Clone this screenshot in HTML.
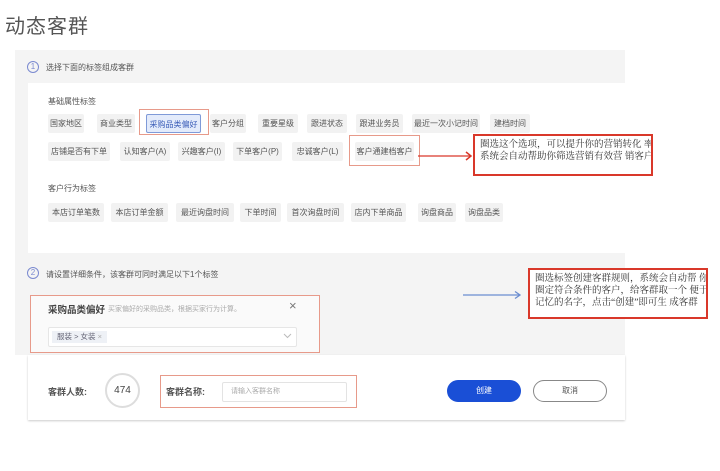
<!DOCTYPE html>
<html><head><meta charset="utf-8"><style>
*{margin:0;padding:0;box-sizing:border-box}
body{width:720px;height:471px;background:#fff;position:relative;overflow:hidden;font-family:"Liberation Sans","Noto Sans CJK SC",sans-serif;color:#555}
.a{position:absolute}
.chip{position:absolute;height:19px;background:#f2f2f2;border-radius:2px;font-size:8px;line-height:19px;text-align:center;color:#555;white-space:nowrap}
.lbl{position:absolute;font-size:8px;color:#555}
.rb{position:absolute;border:1px solid #e79a8a}
.note{position:absolute;border:2px solid #d9382a;background:#fff;font-family:"Liberation Serif","Noto Serif CJK SC",serif;font-size:9.5px;line-height:12px;color:#333;padding:3px 5px;overflow:hidden;white-space:nowrap}
</style></head><body>
<div class="a" style="left:5px;top:10px;font-size:20px;color:#555;letter-spacing:1px">动态客群</div>
<div class="a" style="left:15px;top:50px;width:610px;height:305px;background:#f4f4f4"></div>
<div class="a" style="left:28px;top:83px;width:597px;height:170px;background:#fff"></div>
<div class="a" style="left:27px;top:61px;width:12px;height:12px;border:1px solid #7b8ad0;border-radius:50%;font-size:8px;line-height:10px;text-align:center;color:#7b8ad0">1</div>
<div class="lbl" style="left:46px;top:62px">选择下面的标签组成客群</div>
<div class="lbl" style="left:48px;top:96px">基础属性标签</div>
<div class="chip" style="left:48px;top:114px;width:36px">国家地区</div>
<div class="chip" style="left:97px;top:114px;width:38px">商业类型</div>
<div class="rb" style="left:139px;top:109px;width:70px;height:26px"></div>
<div class="chip" style="left:146px;top:114px;width:55px;background:#e3ebfb;border:1px solid #7f9ad8;color:#3b5db8">采购品类偏好</div>
<div class="chip" style="left:210px;top:114px;width:36px">客户分组</div>
<div class="chip" style="left:258px;top:114px;width:40px">重要星级</div>
<div class="chip" style="left:307px;top:114px;width:40px">跟进状态</div>
<div class="chip" style="left:356px;top:114px;width:47px">跟进业务员</div>
<div class="chip" style="left:412px;top:114px;width:68px">最近一次小记时间</div>
<div class="chip" style="left:490px;top:114px;width:40px">建档时间</div>
<div class="chip" style="left:48px;top:142px;width:62px">店铺是否有下单</div>
<div class="chip" style="left:120px;top:142px;width:50px">认知客户(A)</div>
<div class="chip" style="left:178px;top:142px;width:47px">兴趣客户(I)</div>
<div class="chip" style="left:233px;top:142px;width:49px">下单客户(P)</div>
<div class="chip" style="left:292px;top:142px;width:51px">忠诚客户(L)</div>
<div class="rb" style="left:349px;top:135px;width:71px;height:31px"></div>
<div class="chip" style="left:355px;top:142px;width:59px">客户通建档客户</div>
<div class="lbl" style="left:48px;top:183px">客户行为标签</div>
<div class="chip" style="left:48px;top:203px;width:56px">本店订单笔数</div>
<div class="chip" style="left:111px;top:203px;width:57px">本店订单金额</div>
<div class="chip" style="left:176px;top:203px;width:58px">最近询盘时间</div>
<div class="chip" style="left:240px;top:203px;width:41px">下单时间</div>
<div class="chip" style="left:287px;top:203px;width:57px">首次询盘时间</div>
<div class="chip" style="left:351px;top:203px;width:55px">店内下单商品</div>
<div class="chip" style="left:418px;top:203px;width:38px">询盘商品</div>
<div class="chip" style="left:465px;top:203px;width:38px">询盘品类</div>
<svg class="a" style="left:418px;top:150px" width="56" height="12"><line x1="0" y1="6" x2="52" y2="6" stroke="#d9382a" stroke-width="1.3"/><path d="M48 2 L53 6 L48 10" fill="none" stroke="#d9382a" stroke-width="1.5"/></svg>
<div class="note" style="left:473px;top:134px;width:180px;height:42px">圈选这个选项，可以提升你的营销转化 率,<br>系统会自动帮助你筛选营销有效营 销客户</div>
<div class="a" style="left:27px;top:267px;width:12px;height:12px;border:1px solid #7b8ad0;border-radius:50%;font-size:8px;line-height:10px;text-align:center;color:#7b8ad0">2</div>
<div class="lbl" style="left:46px;top:269px">请设置详细条件，该客群可同时满足以下1个标签</div>
<div class="a" style="left:30px;top:295px;width:290px;height:58px;border:1px solid #e79a8a;background:#fafafa"></div>
<div class="a" style="left:48px;top:302px;font-size:9.5px;font-weight:bold;color:#444">采购品类偏好</div>
<div class="a" style="left:108px;top:304px;font-size:7px;color:#aaa">买家偏好的采购品类，根据买家行为计算。</div>
<div class="a" style="left:289px;top:298px;font-size:13px;color:#777">×</div>
<div class="a" style="left:48px;top:327px;width:249px;height:20px;background:#fff;border:1px solid #e6e6e6;border-radius:2px"></div>
<div class="a" style="left:52px;top:331px;height:12px;padding:0 5px;background:#eef1f6;font-size:7.5px;line-height:12px;color:#667">服装 &gt; 女装 <span style="color:#aaa">×</span></div>
<svg class="a" style="left:283px;top:333px" width="9" height="6"><path d="M1 1 L4.5 4.5 L8 1" fill="none" stroke="#bbb" stroke-width="1"/></svg>
<svg class="a" style="left:463px;top:290px" width="60" height="10"><line x1="0" y1="5" x2="56" y2="5" stroke="#6b8dd0" stroke-width="1.2"/><path d="M52 1.5 L57 5 L52 8.5" fill="none" stroke="#6b8dd0" stroke-width="1.3"/></svg>
<div class="note" style="left:528px;top:268px;width:180px;height:51px">圈选标签创建客群规则，系统会自动帮 你<br>圈定符合条件的客户，给客群取一个 便于<br>记忆的名字，点击“创建”即可生 成客群</div>
<div class="a" style="left:28px;top:355px;width:597px;height:65px;background:#fff;box-shadow:0 1px 2px #ccc"></div>
<div class="a" style="left:48px;top:385px;font-size:9px;font-weight:bold;color:#555">客群人数:</div>
<div class="a" style="left:105px;top:373px;width:35px;height:35px;border:2px solid #ddd;border-radius:50%;font-size:10px;line-height:31px;text-align:center;color:#444">474</div>
<div class="rb" style="left:160px;top:375px;width:197px;height:33px"></div>
<div class="a" style="left:166px;top:385px;font-size:9px;font-weight:bold;color:#555">客群名称:</div>
<div class="a" style="left:222px;top:382px;width:125px;height:20px;border:1px solid #e3e3e3;border-radius:2px;font-size:7px;line-height:18px;padding-left:8px;color:#aaa">请输入客群名称</div>
<div class="a" style="left:447px;top:380px;width:74px;height:22px;background:#1a4fd6;border-radius:11px;font-size:8px;line-height:22px;text-align:center;color:#fff">创建</div>
<div class="a" style="left:533px;top:380px;width:74px;height:22px;border:1px solid #888;border-radius:11px;font-size:8px;line-height:20px;text-align:center;color:#555">取消</div>
</body></html>
